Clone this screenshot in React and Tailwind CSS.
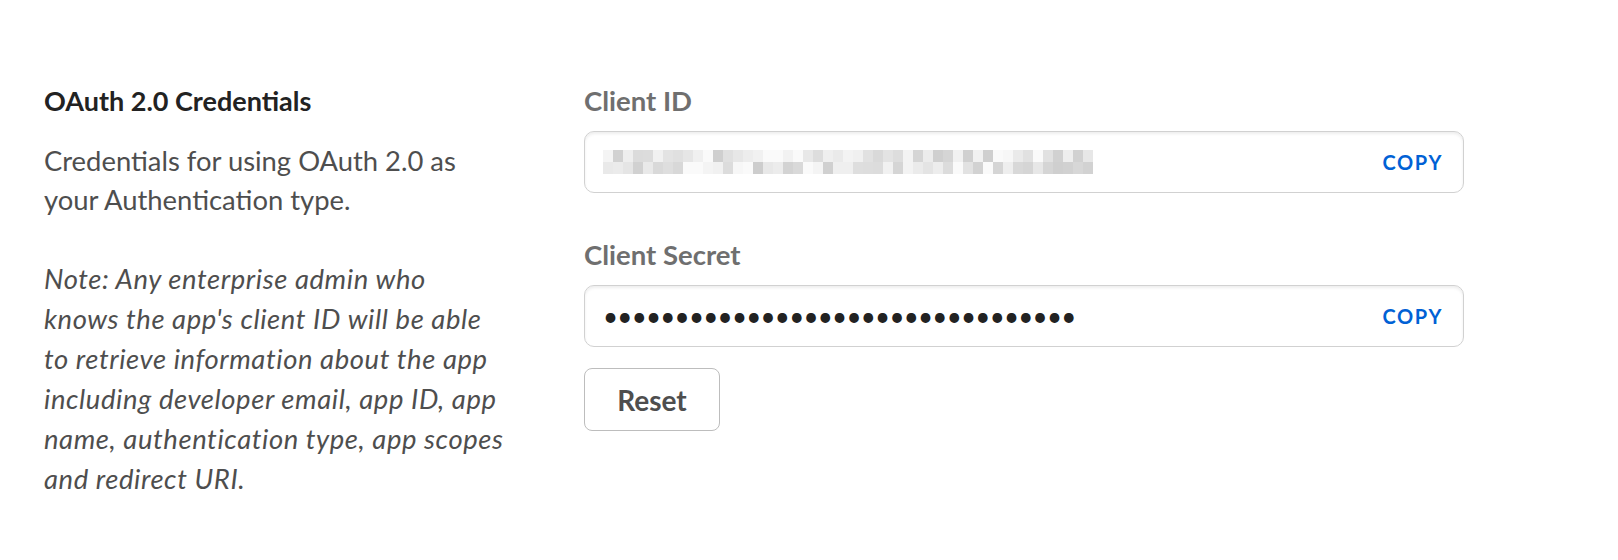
import React from 'react';

// pixelated / redacted client id
const Mosaic = () => {
  const cols = 49;
  const rows = 2;
  let seed = 11;
  const rand = () => {
    seed = (seed * 9301 + 49297) % 233280;
    return seed / 233280;
  };
  const cells = [];
  for (let r = 0; r < rows; r++) {
    for (let c = 0; c < cols; c++) {
      const v = rand();
      const g = v < 0.15 ? 250 : Math.round(205 + rand() * 43);
      cells.push(
        <rect key={`${r}-${c}`} x={c * 10} y={r * 12} width="10" height="12" fill={`rgb(${g},${g},${g})`} />
      );
    }
  }
  return (
    <svg width={cols * 10} height={rows * 12} viewBox={`0 0 ${cols * 10} ${rows * 12}`} shapeRendering="crispEdges">
      {cells}
    </svg>
  );
};

const CopyField = ({ children }) => (
  <div className="flex items-center justify-between h-[62px] w-[880px] pl-[18px] pr-[20px] border border-[#d1d1d1] rounded-[10px] bg-white shadow-[inset_0_2px_3px_rgba(0,0,0,0.07)]">
    <div className="flex items-center">{children}</div>
    <button className="text-[20px] leading-none font-bold tracking-[0.08em] text-[#0061d5]">COPY</button>
  </div>
);

const App = () => (
  <div className="min-h-[560px] bg-white pt-[86px] pl-[44px] flex font-['Lato','Open_Sans',sans-serif]">
    <div className="w-[540px] shrink-0">
      <h2 className="text-[27px] leading-[30px] font-bold text-[#222222]">OAuth 2.0 Credentials</h2>
      <p className="mt-[25px] text-[27.4px] leading-[39px] text-[#4e4e4e]">
        Credentials for using OAuth 2.0 as
        <br />
        your Authentication type.
      </p>
      <p className="mt-[40px] text-[27.4px] leading-[40px] italic tracking-[0.6px] text-[#4e4e4e]">
        Note: Any enterprise admin who
        <br />
        knows the app's client ID will be able
        <br />
        to retrieve information about the app
        <br />
        including developer email, app ID, app
        <br />
        name, authentication type, app scopes
        <br />
        and redirect URI.
      </p>
    </div>
    <div className="w-[880px] shrink-0">
      <label className="block text-[27.5px] leading-[30px] font-bold text-[#6f6f6f]">Client ID</label>
      <div className="mt-[15px]">
        <CopyField>
          <Mosaic />
        </CopyField>
      </div>
      <label className="block mt-[47px] text-[27.5px] leading-[30px] font-bold text-[#6f6f6f]">Client Secret</label>
      <div className="mt-[15px]">
        <CopyField>
          <span className="text-[26px] leading-none tracking-[-0.76px] text-[#222222]">
            {'•'.repeat(33)}
          </span>
        </CopyField>
      </div>
      <button className="mt-[21px] h-[63px] w-[136px] rounded-[8px] border border-[#bdbdbd] bg-white text-[28px] font-bold text-[#4e4e4e]">
        Reset
      </button>
    </div>
  </div>
);

export default App;
